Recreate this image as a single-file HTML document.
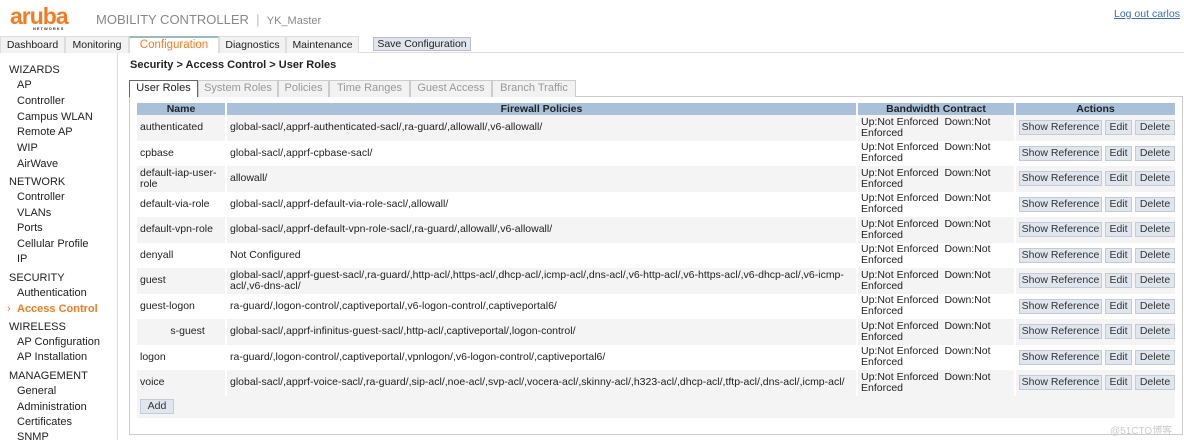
<!DOCTYPE html>
<html><head><meta charset="utf-8"><style>
*{margin:0;padding:0;box-sizing:border-box}
body{width:1184px;height:440px;overflow:hidden;background:#fff;font-family:"Liberation Sans",sans-serif;font-size:11px;color:#222;position:relative}
.a{position:absolute;white-space:nowrap}
.logo{left:10px;top:3px;font-size:23px;font-weight:bold;color:#f47c20;letter-spacing:-1px}
.nw{left:33px;top:26px;font-size:4px;font-weight:bold;letter-spacing:1px;color:#333}
.mc{left:96px;top:12px;font-size:13px;color:#888}
.tabs{left:0;top:36px;height:17px;width:1184px;border-bottom:1px solid #ddd}
.tab{position:absolute;top:0;height:17px;border:1px solid #ddd;border-bottom:none;background:#f2f2f2;font-size:10.5px;line-height:16px;text-align:center;color:#222}
.tab.on{background:#fff;color:#f47c20;border-top:2px solid #9bb;font-size:11.5px;line-height:14px}
.save{left:373px;top:37px;width:98px;height:14px;background:#dfe6ed;border:1px solid #bbc;font-size:10.5px;line-height:12px;text-align:center}
.side{left:0;top:53px;width:118px;height:387px;border-right:1px solid #ddd}
.s{position:absolute;font-size:11px;color:#222;white-space:nowrap}
.h{left:9px}.i{left:17px}
.bc{left:130px;top:59px;font-size:11px;font-weight:bold}
.box{left:129px;top:96px;width:1054px;height:339px;border:1px solid #ccc}
.st{position:absolute;top:80px;height:17px;border:1px solid #ccc;border-bottom:none;background:#f2f2f2;color:#999;font-size:11px;line-height:15px;text-align:center}
.st.on{background:#fff;color:#222;border-color:#666}
table{position:absolute;left:137px;top:103px;width:1039px;border-collapse:collapse;table-layout:fixed}
th{background:#a8c0da;height:12px;font-size:10.5px;font-weight:bold;padding:0;border-right:2px solid #fff;line-height:12px;overflow:hidden;white-space:nowrap}
td{height:25.5px;padding:0 2px 0 3px;font-size:10.5px;line-height:11px;vertical-align:middle;border-right:2px solid #fff;overflow:hidden;white-space:nowrap}
tr.g td{background:#f4f4f4}
.b{display:inline-block;background:#dfe6ed;border:1px solid #c3ccd6;height:15px;line-height:13px;font-size:10.5px;color:#333;margin-right:3px;text-align:center;vertical-align:middle}
.b1{width:83px}.b2{width:27px}.b3{width:40px}
</style></head><body>
<div class="a logo">aruba</div>
<div class="a nw">NETWORKS</div>
<div class="a mc">MOBILITY CONTROLLER &nbsp;<span style="color:#bbb">|</span>&nbsp; <span style="font-size:11px">YK_Master</span></div>
<div class="a" style="left:1114px;top:8px;color:#3b6fb5;text-decoration:underline;font-size:10.5px">Log out carlos</div>
<div class="a tabs">
<div class="tab" style="left:0;width:65px">Dashboard</div>
<div class="tab" style="left:65px;width:64px">Monitoring</div>
<div class="tab on" style="left:129px;width:90px">Configuration</div>
<div class="tab" style="left:219px;width:67px">Diagnostics</div>
<div class="tab" style="left:286px;width:73px">Maintenance</div>
</div>
<div class="a save">Save Configuration</div>
<div class="a side"></div>
<div class="s h" style="top:64px">WIZARDS</div>
<div class="s i" style="top:79px">AP</div>
<div class="s i" style="top:95px">Controller</div>
<div class="s i" style="top:111px">Campus WLAN</div>
<div class="s i" style="top:126px">Remote AP</div>
<div class="s i" style="top:142px">WIP</div>
<div class="s i" style="top:158px">AirWave</div>
<div class="s h" style="top:176px">NETWORK</div>
<div class="s i" style="top:191px">Controller</div>
<div class="s i" style="top:207px">VLANs</div>
<div class="s i" style="top:222px">Ports</div>
<div class="s i" style="top:238px">Cellular Profile</div>
<div class="s i" style="top:253px">IP</div>
<div class="s h" style="top:272px">SECURITY</div>
<div class="s i" style="top:287px">Authentication</div>
<div class="s" style="left:7px;top:303px;color:#f47c20">›</div>
<div class="s i" style="top:303px;color:#f47c20;font-weight:bold">Access Control</div>
<div class="s h" style="top:321px">WIRELESS</div>
<div class="s i" style="top:336px">AP Configuration</div>
<div class="s i" style="top:351px">AP Installation</div>
<div class="s h" style="top:370px">MANAGEMENT</div>
<div class="s i" style="top:385px">General</div>
<div class="s i" style="top:401px">Administration</div>
<div class="s i" style="top:416px">Certificates</div>
<div class="s i" style="top:431px">SNMP</div>
<div class="a bc">Security &gt; Access Control &gt; User Roles</div>
<div class="a box"></div>
<div class="st on" style="left:129px;width:69px">User Roles</div>
<div class="st" style="left:198px;width:80px">System Roles</div>
<div class="st" style="left:278px;width:51px">Policies</div>
<div class="st" style="left:329px;width:81px">Time Ranges</div>
<div class="st" style="left:410px;width:82px">Guest Access</div>
<div class="st" style="left:492px;width:84px">Branch Traffic</div>
<table>
<colgroup><col style="width:89px"><col style="width:631px"><col style="width:158px"><col style="width:161px"></colgroup>
<tr><th>Name</th><th>Firewall Policies</th><th>Bandwidth Contract</th><th>Actions</th></tr>
<tr class="g"><td>authenticated</td><td>global-sacl/,apprf-authenticated-sacl/,ra-guard/,allowall/,v6-allowall/</td><td>Up:Not Enforced&nbsp; Down:Not<br>Enforced</td><td><span class="b b1">Show Reference</span><span class="b b2">Edit</span><span class="b b3">Delete</span></td></tr>
<tr><td>cpbase</td><td>global-sacl/,apprf-cpbase-sacl/</td><td>Up:Not Enforced&nbsp; Down:Not<br>Enforced</td><td><span class="b b1">Show Reference</span><span class="b b2">Edit</span><span class="b b3">Delete</span></td></tr>
<tr class="g"><td>default-iap-user-<br>role</td><td>allowall/</td><td>Up:Not Enforced&nbsp; Down:Not<br>Enforced</td><td><span class="b b1">Show Reference</span><span class="b b2">Edit</span><span class="b b3">Delete</span></td></tr>
<tr><td>default-via-role</td><td>global-sacl/,apprf-default-via-role-sacl/,allowall/</td><td>Up:Not Enforced&nbsp; Down:Not<br>Enforced</td><td><span class="b b1">Show Reference</span><span class="b b2">Edit</span><span class="b b3">Delete</span></td></tr>
<tr class="g"><td>default-vpn-role</td><td>global-sacl/,apprf-default-vpn-role-sacl/,ra-guard/,allowall/,v6-allowall/</td><td>Up:Not Enforced&nbsp; Down:Not<br>Enforced</td><td><span class="b b1">Show Reference</span><span class="b b2">Edit</span><span class="b b3">Delete</span></td></tr>
<tr><td>denyall</td><td>Not Configured</td><td>Up:Not Enforced&nbsp; Down:Not<br>Enforced</td><td><span class="b b1">Show Reference</span><span class="b b2">Edit</span><span class="b b3">Delete</span></td></tr>
<tr class="g"><td>guest</td><td>global-sacl/,apprf-guest-sacl/,ra-guard/,http-acl/,https-acl/,dhcp-acl/,icmp-acl/,dns-acl/,v6-http-acl/,v6-https-acl/,v6-dhcp-acl/,v6-icmp-<br>acl/,v6-dns-acl/</td><td>Up:Not Enforced&nbsp; Down:Not<br>Enforced</td><td><span class="b b1">Show Reference</span><span class="b b2">Edit</span><span class="b b3">Delete</span></td></tr>
<tr><td>guest-logon</td><td>ra-guard/,logon-control/,captiveportal/,v6-logon-control/,captiveportal6/</td><td>Up:Not Enforced&nbsp; Down:Not<br>Enforced</td><td><span class="b b1">Show Reference</span><span class="b b2">Edit</span><span class="b b3">Delete</span></td></tr>
<tr class="g"><td><span style="color:#f4f4f4">infinitu</span>s-guest</td><td>global-sacl/,apprf-infinitus-guest-sacl/,http-acl/,captiveportal/,logon-control/</td><td>Up:Not Enforced&nbsp; Down:Not<br>Enforced</td><td><span class="b b1">Show Reference</span><span class="b b2">Edit</span><span class="b b3">Delete</span></td></tr>
<tr><td>logon</td><td>ra-guard/,logon-control/,captiveportal/,vpnlogon/,v6-logon-control/,captiveportal6/</td><td>Up:Not Enforced&nbsp; Down:Not<br>Enforced</td><td><span class="b b1">Show Reference</span><span class="b b2">Edit</span><span class="b b3">Delete</span></td></tr>
<tr class="g"><td>voice</td><td>global-sacl/,apprf-voice-sacl/,ra-guard/,sip-acl/,noe-acl/,svp-acl/,vocera-acl/,skinny-acl/,h323-acl/,dhcp-acl/,tftp-acl/,dns-acl/,icmp-acl/</td><td>Up:Not Enforced&nbsp; Down:Not<br>Enforced</td><td><span class="b b1">Show Reference</span><span class="b b2">Edit</span><span class="b b3">Delete</span></td></tr>
<tr><td colspan="4" style="height:22px;background:#f4f4f4"><span class="b" style="width:34px">Add</span></td></tr>
</table>
<div class="a" style="left:1110px;top:422px;color:#ccc;font-size:10px">@51CTO博客</div>
</body></html>
